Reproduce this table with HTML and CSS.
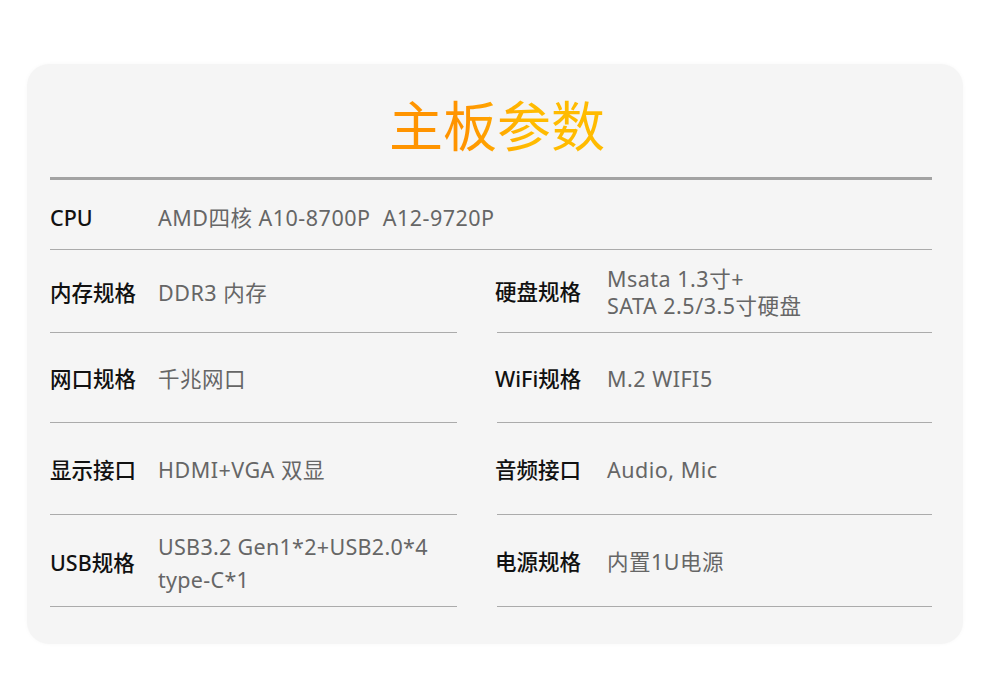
FILE: index.html
```html
<!DOCTYPE html>
<html lang="zh">
<head>
<meta charset="utf-8">
<link rel="stylesheet" href="styles.css">
</head>
<body>
<div class="card">
  <div class="title-wrap"><h1 class="title">主板参数</h1></div>
  <div class="rule-thick"></div>
  <div class="row row-cpu">
    <div class="label">CPU</div>
    <div class="value">AMD四核 A10-8700P&nbsp; A12-9720P</div>
  </div>
  <div class="grid">
    <div class="cell r1">
      <div class="label">内存规格</div>
      <div class="value">DDR3 内存</div>
    </div>
    <div class="cell r1 right">
      <div class="label">硬盘规格</div>
      <div class="value two">Msata 1.3寸+<br>SATA 2.5/3.5寸硬盘</div>
    </div>
    <div class="cell r2">
      <div class="label">网口规格</div>
      <div class="value">千兆网口</div>
    </div>
    <div class="cell r2 right">
      <div class="label">WiFi规格</div>
      <div class="value">M.2 WIFI5</div>
    </div>
    <div class="cell r3">
      <div class="label">显示接口</div>
      <div class="value">HDMI+VGA 双显</div>
    </div>
    <div class="cell r3 right">
      <div class="label">音频接口</div>
      <div class="value">Audio, Mic</div>
    </div>
    <div class="cell r4">
      <div class="label">USB规格</div>
      <div class="value two usb">USB3.2 Gen1*2+USB2.0*4<br>type-C*1</div>
    </div>
    <div class="cell r4 right">
      <div class="label">电源规格</div>
      <div class="value">内置1U电源</div>
    </div>
  </div>
</div>
</body>
</html>
```
FILE: styles.css
```css
* { box-sizing: border-box; }
html, body { margin: 0; padding: 0; background: #ffffff; }
body {
  width: 990px;
  height: 683px;
  padding: 64px 27px 0 27px;
  font-family: "Noto Sans", "Noto Sans CJK SC", sans-serif;
}
.card {
  width: 936px;
  height: 580px;
  background: #f5f5f5;
  border-radius: 22px;
  padding: 0 31px 0 23px;
  box-shadow: 0 0 4px rgba(0,0,0,0.03);
}
.title-wrap {
  height: 113px;
  padding-top: 25px;
  padding-left: 12px;
  text-align: center;
}
.title {
  display: inline-block;
  margin: 0;
  font-family: "Noto Sans CJK SC", sans-serif;
  font-size: 54px;
  font-weight: 400;
  line-height: 70px;
  background: linear-gradient(90deg, #ff9400 35%, #ffbb00 65%);
  background-clip: text;
  -webkit-background-clip: text;
  color: transparent;
  white-space: nowrap;
}
.rule-thick {
  height: 3px;
  background: #a3a3a3;
}
.row {
  display: flex;
  align-items: center;
  border-bottom: 1px solid #ababab;
}
.row-cpu {
  height: 70px;
  padding-top: 6px;
}
.label {
  width: 108px;
  flex: none;
  font-size: 21.5px;
  font-weight: 500;
  color: #111;
  line-height: 28px;
}
.value {
  font-size: 21.5px;
  color: #666;
  line-height: 28px;
  letter-spacing: 0.5px;
}
.value.two { line-height: 27px; }
.value.usb { line-height: 33px; letter-spacing: 0.3px; }
.grid {
  display: grid;
  grid-template-columns: 407px 435px;
  column-gap: 40px;
  grid-template-rows: 83px 90px 92px 92px;
}
.cell {
  display: flex;
  align-items: center;
  border-bottom: 1px solid #ababab;
  padding-top: 3px;
}
.cell.right .label {
  width: 112px;
  margin-left: -2px;
}
.cell.r1.right { padding-top: 2px; }
.cell.r4 { padding-top: 5px; }
.cell.r4.right { padding-top: 3px; }
```
